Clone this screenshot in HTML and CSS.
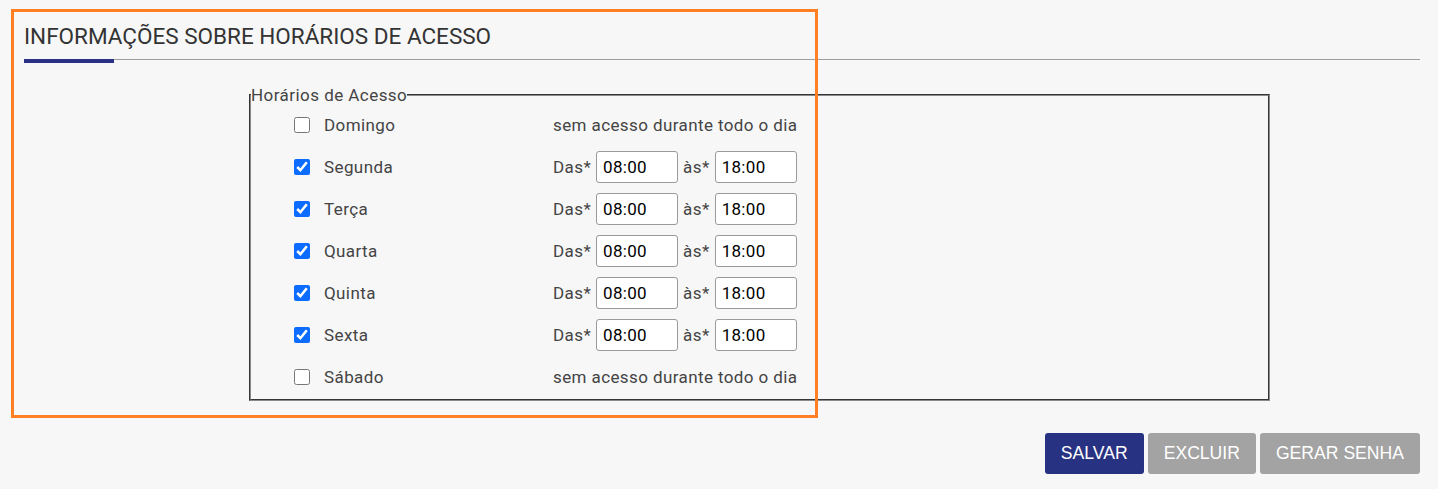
FILE: index.html
```html
<!DOCTYPE html>
<html lang="pt-BR">
<head>
<meta charset="utf-8">
<title>Horários de Acesso</title>
<link rel="stylesheet" href="styles.css">
</head>
<body>
<div class="page">
  <section class="section">
    <h2 class="section-title">INFORMAÇÕES SOBRE HORÁRIOS DE ACESSO</h2>
    <div class="title-rule"><span class="rule-accent"></span><span class="rule-line"></span></div>

    <fieldset class="schedule">
      <legend class="schedule-legend">Horários de Acesso</legend>
      <div class="rows">
        <div class="row">
          <input type="checkbox" class="day-check">
          <span class="day-label">Domingo</span>
          <span class="no-access">sem acesso durante todo o dia</span>
        </div>
        <div class="row">
          <input type="checkbox" class="day-check" checked>
          <span class="day-label">Segunda</span>
          <span class="times"><span class="time-label">Das*</span><input class="time-input" type="text" value="08:00"><span class="time-label">às*</span><input class="time-input" type="text" value="18:00"></span>
        </div>
        <div class="row">
          <input type="checkbox" class="day-check" checked>
          <span class="day-label">Terça</span>
          <span class="times"><span class="time-label">Das*</span><input class="time-input" type="text" value="08:00"><span class="time-label">às*</span><input class="time-input" type="text" value="18:00"></span>
        </div>
        <div class="row">
          <input type="checkbox" class="day-check" checked>
          <span class="day-label">Quarta</span>
          <span class="times"><span class="time-label">Das*</span><input class="time-input" type="text" value="08:00"><span class="time-label">às*</span><input class="time-input" type="text" value="18:00"></span>
        </div>
        <div class="row">
          <input type="checkbox" class="day-check" checked>
          <span class="day-label">Quinta</span>
          <span class="times"><span class="time-label">Das*</span><input class="time-input" type="text" value="08:00"><span class="time-label">às*</span><input class="time-input" type="text" value="18:00"></span>
        </div>
        <div class="row">
          <input type="checkbox" class="day-check" checked>
          <span class="day-label">Sexta</span>
          <span class="times"><span class="time-label">Das*</span><input class="time-input" type="text" value="08:00"><span class="time-label">às*</span><input class="time-input" type="text" value="18:00"></span>
        </div>
        <div class="row">
          <input type="checkbox" class="day-check">
          <span class="day-label">Sábado</span>
          <span class="no-access">sem acesso durante todo o dia</span>
        </div>
      </div>
    </fieldset>
  </section>

  <div class="actions">
    <button class="btn btn-primary" type="button">SALVAR</button>
    <button class="btn btn-muted" type="button">EXCLUIR</button>
    <button class="btn btn-muted" type="button">GERAR SENHA</button>
  </div>

  <div class="highlight"></div>
</div>
</body>
</html>
```

FILE: styles.css
```css
html, body {
  margin: 0;
  padding: 0;
  background: #f7f7f7;
}

body {
  font-family: Roboto, "Liberation Sans", Arial, sans-serif;
  color: #444;
}

.page {
  position: relative;
  padding: 0 18px 0 24px;
}

.section-title {
  margin: 0;
  padding-top: 23px;
  font-size: 22.5px;
  font-weight: 400;
  color: #333;
  line-height: 26px;
}

.title-rule {
  display: flex;
  align-items: flex-start;
  margin-top: 10px;
}

.rule-accent {
  width: 90px;
  height: 4px;
  background: #2b3184;
}

.rule-line {
  flex: 1;
  height: 1px;
  background: #9e9e9e;
}

.schedule {
  margin: 22px 0 0 225px;
  width: 1021px;
  box-sizing: border-box;
  padding: 4px 0 6px 0;
  border: 2px groove #8a8a8a;
  min-width: 0;
}

.schedule-legend {
  padding: 0;
  font-size: 17px;
  letter-spacing: 0.45px;
  color: #444;
}

.rows {
  display: flex;
  flex-direction: column;
  gap: 10px;
  padding-left: 43px;
}

.row {
  display: grid;
  grid-template-columns: 16px 215px auto;
  column-gap: 14px;
  align-items: center;
  height: 32px;
  font-size: 17px;
  letter-spacing: 0.4px;
}

.day-check {
  margin: 0;
  width: 16px;
  height: 16px;
  accent-color: #0b6cff;
}

.day-label {
  color: #444;
}

.no-access {
  color: #444;
}

.times {
  display: flex;
  align-items: center;
  gap: 5px;
}

.time-label {
  color: #444;
}

.time-input {
  width: 82px;
  height: 32px;
  box-sizing: border-box;
  border: 1px solid #9a9a9a;
  border-radius: 3px;
  padding: 0 5px 0 6px;
  margin: 0;
  background: #fff;
  font-family: Roboto, "Liberation Sans", Arial, sans-serif;
  font-size: 17px;
  letter-spacing: 0.3px;
  color: #000;
}

.actions {
  display: flex;
  justify-content: flex-end;
  gap: 4px;
  margin-top: 32px;
}

.btn {
  height: 41px;
  padding: 0 16px;
  border: none;
  border-radius: 3px;
  font-family: "Liberation Sans", Arial, sans-serif;
  font-size: 17.6px;
  color: #fff;
  cursor: pointer;
}

.btn-primary {
  background: #283282;
}

.btn-muted {
  background: #a3a3a3;
}

.highlight {
  position: absolute;
  left: 11px;
  top: 9px;
  width: 807px;
  height: 409px;
  box-sizing: border-box;
  border: 3px solid #ff7f22;
  pointer-events: none;
}
```
